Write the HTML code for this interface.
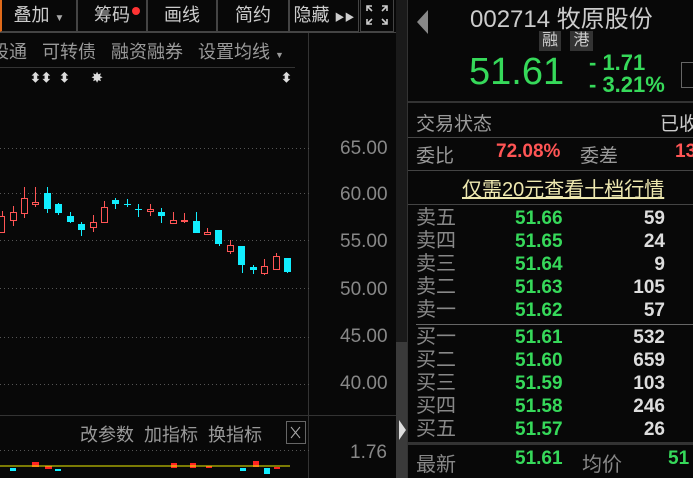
<!DOCTYPE html><html><head><meta charset="utf-8"><style>
*{margin:0;padding:0;box-sizing:border-box}
body{width:693px;height:478px;background:#080808;overflow:hidden;position:relative;font-family:"Liberation Sans","Noto Sans CJK SC",sans-serif;color:#999}
.a{position:absolute;white-space:nowrap}
.btn{position:absolute;top:0;height:32px;border:1px solid #444;border-top:none;color:#ccc;font-size:18px;line-height:31px;text-align:center}
.g{color:#36d95a;font-weight:bold}
.w{color:#ddd;font-weight:bold}
.hl{position:absolute;height:1px;background:#444}
</style></head><body>
<!-- toolbar -->
<div class="btn" style="left:0;width:77px;border-left:2px solid #e06a1a">叠加 <span style="font-size:10px;color:#aaa">▼</span></div>
<div class="btn" style="left:77px;width:70px">筹码<span style="position:absolute;left:54px;top:7px;width:8px;height:8px;border-radius:50%;background:#f33"></span></div>
<div class="btn" style="left:147px;width:70px">画线</div>
<div class="btn" style="left:217px;width:72px">简约</div>
<div class="btn" style="left:289px;width:70px">隐藏 <span style="font-size:10px">▶▶</span></div>
<div class="btn" style="left:360px;width:34px;"><svg width="22" height="20" viewBox="0 0 22 20" style="margin-top:5px" fill="none" stroke="#ccc" stroke-width="1.6"><path d="M1 6V1h5M1 1l5 5M21 6V1h-5M21 1l-5 5M1 14v5h5M1 19l5-5M21 14v5h-5M21 19l-5-5"/></svg></div>
<div class="hl" style="left:0;top:32px;width:396px"></div>
<!-- second row -->
<div class="a" style="left:-9px;top:38px;font-size:18px;color:#999">股通&nbsp;&nbsp;&nbsp;可转债&nbsp;&nbsp;&nbsp;融资融券&nbsp;&nbsp;&nbsp;设置均线 <span style="font-size:9px">▼</span></div>
<div class="hl" style="left:0;top:67px;width:295px;background:#333"></div>
<div class="a" style="left:308px;top:33px;width:1px;height:382px;background:#333"></div>
<div class="a" style="left:308px;top:415px;width:1px;height:63px;background:#333"></div>
<!-- markers -->
<div class="a" style="left:30px;top:70px;font-size:13px;color:#ddd;font-weight:bold">⬍⬍&nbsp;&nbsp;⬍&nbsp;&nbsp;&nbsp;&nbsp;&nbsp;&nbsp;✸</div>
<div class="a" style="left:281px;top:70px;font-size:13px;color:#ddd;font-weight:bold">⬍</div>
<!-- grid -->
<svg class="a" style="left:0;top:0" width="396" height="478">
<g stroke="#555" stroke-dasharray="1 3"><path d="M0 148.5H310M0 193.5H310M0 240.5H310M0 288.5H310M0 337.5H310M0 384.5H310M0 450.5H310"/></g>
<path d="M0 415.5H396" stroke="#333"/>
<g stroke-width="1">
<g stroke="#f55" fill="none">
<path d="M2.5 211V233M13.5 206V226M24.5 187V218M35.5 187V207M93.5 215V232M104.5 201V222M150.5 204V216M173.5 212V223M184.5 213V223M207.5 228V234M230.5 240V254M264.5 259V275M276.5 253V270"/>
</g>
<g fill="#080808" stroke="#f55">
<rect x="-1.5" y="216.5" width="6" height="16"/><rect x="10.5" y="212.5" width="6" height="8"/><rect x="21.5" y="198.5" width="6" height="15"/><rect x="32.5" y="202.5" width="6" height="2"/><rect x="90.5" y="222.5" width="6" height="5"/><rect x="101.5" y="207.5" width="6" height="15"/><rect x="147.5" y="209.5" width="6" height="2"/><rect x="170.5" y="220.5" width="6" height="3"/><rect x="181.5" y="220.5" width="6" height="1"/><rect x="204.5" y="232.5" width="6" height="2"/><rect x="227.5" y="245.5" width="6" height="6"/><rect x="261.5" y="266.5" width="6" height="7"/><rect x="273.5" y="256.5" width="6" height="13"/>
</g>
<g stroke="#1ef" fill="#1ef">
<path d="M47.5 187V213M58.5 203V215M70.5 212V223M81.5 222V236M115.5 198V209M127.5 199V207M138.5 204V217M161.5 208V223M196.5 212V233M219.5 230V246M242.5 246V273M253.5 265V274M287.5 258V273" fill="none"/>
<path d="M124 204.5H131M135 209.5H142" fill="none"/>
<rect x="44" y="193" width="7" height="16" stroke="none"/><rect x="55" y="204" width="7" height="9" stroke="none"/><rect x="67" y="216" width="7" height="6" stroke="none"/><rect x="78" y="224" width="7" height="6" stroke="none"/><rect x="112" y="200" width="7" height="4" stroke="none"/><rect x="158" y="212" width="7" height="4" stroke="none"/><rect x="193" y="221" width="7" height="12" stroke="none"/><rect x="215" y="230" width="7" height="14" stroke="none"/><rect x="238" y="246" width="7" height="19" stroke="none"/><rect x="250" y="267" width="7" height="3" stroke="none"/><rect x="284" y="258" width="7" height="14" stroke="none"/>
</g>
</g>
<!-- volume -->
<g fill="#f22"><rect x="32" y="462" width="7" height="5"/><rect x="45" y="466" width="7" height="3"/><rect x="171" y="463" width="6" height="5"/><rect x="190" y="463" width="6" height="5"/><rect x="253" y="461" width="6" height="6"/><rect x="206" y="466" width="6" height="2"/><rect x="274" y="467" width="6" height="2"/></g>
<g fill="#1ef"><rect x="10" y="468" width="6" height="3"/><rect x="264" y="468" width="6" height="6"/><rect x="240" y="468" width="6" height="3"/><rect x="55" y="469" width="6" height="2"/></g>
<path d="M0 466H290" stroke="#ee0" stroke-width="1"/>
<rect x="286.5" y="421.5" width="19" height="22" fill="none" stroke="#666"/>
<path d="M291 427l9 11M300 427l-9 11" stroke="#aaa"/>
</svg>
<!-- axis labels -->
<div class="a" style="left:340px;top:138px;font-size:19px;color:#888">65.00</div>
<div class="a" style="left:340px;top:184px;font-size:19px;color:#888">60.00</div>
<div class="a" style="left:340px;top:231px;font-size:19px;color:#888">55.00</div>
<div class="a" style="left:340px;top:279px;font-size:19px;color:#888">50.00</div>
<div class="a" style="left:340px;top:326px;font-size:19px;color:#888">45.00</div>
<div class="a" style="left:340px;top:373px;font-size:19px;color:#888">40.00</div>
<div class="a" style="left:350px;top:442px;font-size:19px;color:#888">1.76</div>
<div class="a" style="left:80px;top:421px;font-size:18px;color:#999">改参数&nbsp;&nbsp;加指标&nbsp;&nbsp;换指标</div>
<!-- scrollbar -->
<div class="a" style="left:396px;top:0;width:12px;height:342px;background:#1a1a1a"></div>
<div class="a" style="left:396px;top:342px;width:12px;height:136px;background:#3a3a3a"></div>
<div class="a" style="left:399px;top:420px;width:0;height:0;border-top:10px solid transparent;border-bottom:10px solid transparent;border-left:7px solid #ddd"></div>
<!-- right panel -->
<div class="a" style="left:417px;top:10px;width:0;height:0;border-top:12px solid transparent;border-bottom:12px solid transparent;border-right:11px solid #888"></div>
<div class="a" style="left:470px;top:-1px;font-size:24px;color:#ccc">002714 牧原股份</div>
<div class="a" style="left:539px;top:31px;width:22px;height:20px;background:#333;color:#ccc;font-size:16px;line-height:20px;text-align:center">融</div>
<div class="a" style="left:570px;top:31px;width:23px;height:20px;background:#333;color:#ccc;font-size:16px;line-height:20px;text-align:center">港</div>
<div class="a" style="left:469px;top:51px;font-size:38px;color:#36d95a">51.61</div>
<div class="a" style="left:589px;top:52px;font-size:22px;line-height:22px;color:#36d95a;font-weight:bold">- 1.71<br>- 3.21%</div>
<div class="a" style="left:681px;top:62px;width:14px;height:26px;border:1px solid #666"></div>
<div class="hl" style="left:408px;top:101px;width:285px;height:2px;background:#333"></div>
<div class="a" style="left:416px;top:109px;font-size:19px;color:#999">交易状态</div>
<div class="a" style="left:660px;top:109px;font-size:19px;color:#ccc">已收</div>
<div class="hl" style="left:408px;top:137px;width:285px"></div>
<div class="a" style="left:416px;top:141px;font-size:19px;color:#999">委比</div>
<div class="a" style="left:496px;top:141px;font-size:19px;color:#f55;font-weight:bold">72.08%</div>
<div class="a" style="left:580px;top:141px;font-size:19px;color:#999">委差</div>
<div class="a" style="left:675px;top:141px;font-size:19px;color:#f55;font-weight:bold">13</div>
<div class="hl" style="left:408px;top:170px;width:285px"></div>
<div class="a" style="left:462px;top:173px;font-size:20px;color:#eee8b0;text-decoration:underline">仅需20元查看十档行情</div>
<div class="hl" style="left:408px;top:204px;width:285px"></div>
<div class="a" style="left:416px;top:207px;font-size:20px;line-height:23px;color:#888">卖五<br>卖四<br>卖三<br>卖二<br>卖一</div>
<div class="a g" style="left:515px;top:207px;font-size:19px;line-height:23px">51.66<br>51.65<br>51.64<br>51.63<br>51.62</div>
<div class="a w" style="left:610px;width:55px;text-align:right;top:207px;font-size:19px;line-height:23px">59<br>24<br>9<br>105<br>57</div>
<div class="hl" style="left:416px;top:324px;width:277px;background:#666"></div>
<div class="a" style="left:416px;top:326px;font-size:20px;line-height:23px;color:#888">买一<br>买二<br>买三<br>买四<br>买五</div>
<div class="a g" style="left:515px;top:326px;font-size:19px;line-height:23px">51.61<br>51.60<br>51.59<br>51.58<br>51.57</div>
<div class="a w" style="left:610px;width:55px;text-align:right;top:326px;font-size:19px;line-height:23px">532<br>659<br>103<br>246<br>26</div>
<div class="hl" style="left:408px;top:442px;width:285px;height:3px;background:#333"></div>
<div class="a" style="left:416px;top:448px;font-size:20px;color:#888">最新</div>
<div class="a g" style="left:515px;top:448px;font-size:19px">51.61</div>
<div class="a" style="left:582px;top:448px;font-size:20px;color:#888">均价</div>
<div class="a g" style="left:668px;top:448px;font-size:19px">51</div>
<div class="a" style="left:407px;top:0;width:1px;height:478px;background:#333"></div>
</body></html>
